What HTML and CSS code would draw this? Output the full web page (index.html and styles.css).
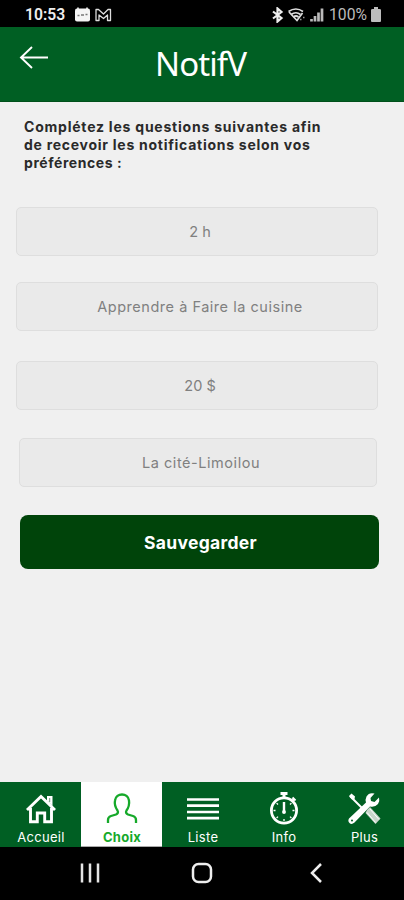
FILE: index.html
```html
<!DOCTYPE html>
<html lang="fr">
<head>
<meta charset="utf-8">
<title>NotifV</title>
<link rel="stylesheet" href="styles.css">
</head>
<body>
<div class="status">
  <span class="clock">10:53</span>
  <svg class="notices" width="38" height="16" viewBox="0 0 38 16">
    <rect x="1" y="1.5" width="15" height="13" rx="2" fill="#f4f4f4"/>
    <path d="M4 .5v2M13 .5v2" stroke="#f4f4f4" stroke-width="1.6"/>
    <path d="M3.5 8.5h2M7 8h3M11.500 7.500h2" stroke="#777" stroke-width="1.400"/>
    <path d="M22 13.500V2.500H24.500L29.500 7 34 2.500H36.500V13.500H33.500V8L29.500 11.500 25 8V13.500Z" fill="none" stroke="#ddd" stroke-width="1.300" stroke-linejoin="round"/>
  </svg>
  <svg class="signals" width="54" height="16" viewBox="0 0 54 16">
    <path d="M2 4.500 10.500 11 6.500 14.500V1.500L10.500 5 2 11.500" fill="none" stroke="#eee" stroke-width="2.200"/>
    <g fill="none" stroke="#ddd" stroke-width="1.700">
      <path d="M17.500 4.500Q25 -.5 32 4.500M20 7.500Q25 4 29.500 7.500M22.500 10Q25 8 27.500 10"/>
      <path d="M18 5 26 13.500 31.500 6"/>
      <path d="M29 12.500h1.500M32 10.500h1.500" stroke="#999"/>
    </g>
    <path d="M40.500 14.500v-2.500M44 14.500V9M47.500 14.500V5.500M51 14.500V1.500" stroke="#bbb" stroke-width="2.700"/>
  </svg>
  <span class="percent">100%</span>
  <svg class="battery" width="10" height="15" viewBox="0 0 10 15"><path d="M3 0h4v2h1.500q1.500 0 1.500 1v11q0 1-1 1h-8q-1 0-1-1V3q0-1 1.500-1H3Z" fill="#bdbdbd"/></svg>
</div>
<header class="header">
  <svg class="back" width="30" height="24" viewBox="0 0 30 24"><path d="M29 12.500H2M13 2 2 12.500 13 23" fill="none" stroke="#fff" stroke-width="1.900"/></svg>
  <h1 class="title">NotifV</h1>
</header>
<main class="content">
  <p class="intro"><span class="l1">Complétez les questions suivantes afin</span><br><span class="l2">de recevoir les notifications selon vos</span><br><span class="l3">préférences :</span></p>
  <div class="field first"><span>2 h</span></div>
  <div class="field second"><span>Apprendre à Faire la cuisine</span></div>
  <div class="field third"><span>20 $</span></div>
  <div class="field fourth"><span>La cité-Limoilou</span></div>
  <button class="save">Sauvegarder</button>
</main>
<nav class="tabs">
  <a class="tab"><svg width="34" height="36" viewBox="0 0 34 36"><path d="M3 20 17 6.500 31 20M6.500 18V31.700H13.300V23H20.700V31.700H27.500V18" fill="none" stroke="#fff" stroke-width="2.900"/><path d="M23 6h5.500v10L23 10.500Z" fill="#fff"/><path d="M25.700 8v4" stroke="#6d9b7a" stroke-width="1"/></svg><span>Accueil</span></a>
  <a class="tab active"><svg width="34" height="36" viewBox="0 0 34 36"><path d="M3 33V30Q3 27 6 26L11 24.500Q14 23 12.500 20.500C9.500 16 9.500 13 10 10.500C11 2.500 23 2.500 24 10.500C24.500 14 24 17 21.500 20.500Q20 23 23 24.500L28 26Q31 27 31 30V33" fill="none" stroke="#16a92a" stroke-width="2.300"/></svg><span>Choix</span></a>
  <a class="tab"><svg width="34" height="36" viewBox="0 0 34 36"><path d="M1 9.500h32M1 15.700h32M1 22h32M1 28.200h32" stroke="#fff" stroke-width="2.700"/></svg><span>Liste</span></a>
  <a class="tab"><svg width="34" height="36" viewBox="0 0 34 36"><g fill="none" stroke="#fff"><circle cx="17" cy="20.500" r="12.600" stroke-width="2.800"/><path d="M13.500 3.500h7M17 3v5" stroke-width="3"/><path d="m25 11 2.500-2.500M25.500 7.500l3 3" stroke-width="2"/><path d="M17 12v11" stroke-width="2.400"/><path d="M17 31v-2M6.500 20.500h2M25.500 20.500h2M9.600 13.100l1.400 1.400M24.400 13.100 23 14.500M9.600 28l1.400-1.400M24.400 28 23 26.600" stroke-width="1.300"/></g><circle cx="17" cy="22" r="1.900" fill="#fff"/></svg><span>Info</span></a>
  <a class="tab"><svg width="34" height="36" viewBox="0 0 34 36"><path d="m3 6 3 3L18 21" fill="none" stroke="#fff" stroke-width="2"/><path d="m2 6 2.500-2.500L8 6.500 7.500 9 5 9.500Z" fill="#fff"/><path d="m20 20 3-3 10.500 11.500-5 5.500-10-11Z" fill="#c9d6cb"/><path d="m23 19 9 10.500M20 22.500l8.500 10" stroke="#fff" stroke-width="1"/><path d="M27.500 3.500Q22 2 19.500 6.500 18 9.500 19 12.500L2 28.500Q.5 31 2.500 33 4.500 35 7.500 32.500L23 16.500Q28 17.500 31 14 33 11 32 7.500L27.500 12 24 11 23.500 8Z" fill="#fff"/><circle cx="5" cy="30.500" r="1" fill="#005f23"/></svg><span>Plus</span></a>
</nav>
<footer class="system">
  <svg width="20" height="22" viewBox="0 0 20 22"><path d="M2 1.500v19M10 1.500v19M18 1.500v19" stroke="#e5e5e5" stroke-width="2.500"/></svg>
  <svg width="22" height="22" viewBox="0 0 22 22"><rect x="2" y="2" width="18" height="18" rx="5.500" fill="none" stroke="#eee" stroke-width="2.500"/></svg>
  <svg width="14" height="22" viewBox="0 0 14 22"><path d="M12 2 3 11l9 9" fill="none" stroke="#eee" stroke-width="2.500"/></svg>
</footer>
</body>
</html>
```
FILE: styles.css
```css
* { box-sizing: border-box; }
body {
  margin: 0;
  width: 404px;
  height: 900px;
  display: flex;
  flex-direction: column;
  overflow: hidden;
  background: #f0f0f0;
  font-family: Inter, "Open Sans", sans-serif;
}
svg { display: block; flex: none; }
.status {
  height: 27px;
  flex: none;
  display: flex;
  align-items: center;
  padding: 2px 23px 0 25px;
  background: #000;
  color: #eee;
  font-family: Roboto, sans-serif;
  white-space: nowrap;
}
.clock { width: 49px; font-size: 15.700px; font-weight: 600; }
.signals { margin-left: auto; }
.percent { width: 40px; margin-left: 4px; font-size: 15.700px; color: #bbb; }
.battery { margin-left: 2px; }
.header {
  height: 75px;
  flex: none;
  display: flex;
  background: #005f23;
  border-bottom: 1px solid #00501b;
  padding: 18px 0 0 19px;
}
.title {
  margin: 0 0 0 106px;
  color: #fff;
  font: 400 33px/38px "Noto Sans", sans-serif;
  letter-spacing: -.9px;
}
.content {
  flex: 1;
  display: flex;
  flex-direction: column;
  align-items: flex-start;
  padding: 16px 16px 0;
}
.intro {
  margin: 0 0 34px 8px;
  height: 55px;
  font-size: 14px;
  font-weight: 700;
  line-height: 18px;
  color: #2a2a2a;
  letter-spacing: .78px;
  white-space: nowrap;
}
.l2 { letter-spacing: .73px; }
.l3 { letter-spacing: .55px; }
.field {
  width: 362px;
  height: 49px;
  display: flex;
  align-items: center;
  justify-content: center;
  padding-left: 6px;
  border: 1px solid #dedede;
  border-radius: 5px;
  background: #eaeaea;
  color: #808080;
  font-size: 14.500px;
}
.second { margin-top: 26px; letter-spacing: .53px; }
.third { margin-top: 30px; }
.fourth { width: 358px; margin: 28px 0 0 3px; letter-spacing: .55px; }
.save {
  width: 359px;
  height: 54px;
  margin: 28px 0 0 3.500px;
  padding: 0 0 0 3px;
  border: 0;
  border-radius: 8px;
  background: #00440a;
  color: #fff;
  font: 700 17.500px Inter, sans-serif;
  letter-spacing: .3px;
}
.tabs {
  height: 65px;
  flex: none;
  display: grid;
  grid-template-columns: repeat(4, 81px) 80px;
  background: #005f23;
}
.tab {
  display: flex;
  flex-direction: column;
  align-items: center;
  padding-top: 8px;
  color: #fff;
  font-size: 13px;
  line-height: 16px;
  letter-spacing: .3px;
}
.tab span { margin: 3px 0 0 1px; }
.active { background: #fff; color: #16a92a; font-weight: 700; border-bottom: 1px solid #aaa; }
.system {
  height: 53px;
  flex: none;
  display: flex;
  padding: 15px 0 0 80px;
  background: #000;
}
.system svg:nth-child(2) { margin-left: 91px; }
.system svg:nth-child(3) { margin-left: 96px; }
```
